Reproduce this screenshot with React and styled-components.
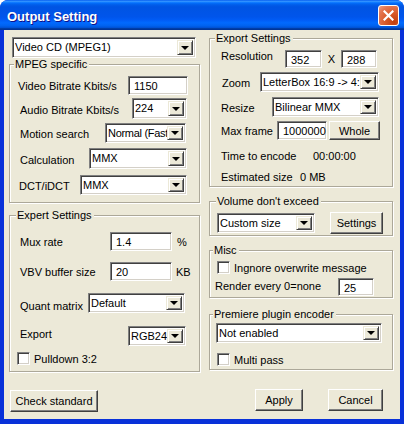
import React from "react";
import styled, { createGlobalStyle } from "styled-components";

const Global = createGlobalStyle`
  html, body { margin: 0; padding: 0; background: #fff; }
  body { font-family: "Liberation Sans", Arial, sans-serif; font-size: 11px; color: #000; }
`;

const Window = styled.div`
  width: 404px;
  height: 424px;
  display: flex;
  flex-direction: column;
  background: #0831d9;
  border-radius: 8px 8px 0 0;
  overflow: hidden;
`;

const TitleBar = styled.div`
  height: 30px;
  flex: none;
  display: flex;
  align-items: center;
  padding: 0 5px 0 7px;
  background: linear-gradient(
    to bottom,
    #0058ee 0%, #3593ff 4%, #288eff 6%, #127dff 8%, #036ffc 10%,
    #0262ee 14%, #0057e5 20%, #0054e3 24%, #0055eb 56%, #005bf5 66%,
    #026afe 76%, #0062ef 86%, #0052d6 92%, #0040ab 94%, #003092 100%
  );
`;

const Title = styled.div`
  flex: 1;
  color: #fff;
  font-weight: bold;
  font-size: 13px;
  text-shadow: 1px 1px #0f1089;
  padding-top: 2px;
`;

const CloseButton = styled.div`
  width: 19px;
  height: 19px;
  border: 1px solid #fff;
  border-radius: 3px;
  display: flex;
  align-items: center;
  justify-content: center;
  background: radial-gradient(circle at 80% 85%, #c13e0d 0%, #d95a28 40%, #e47651 75%, #eea085 100%);
`;

const Client = styled.div`
  flex: 1;
  margin: 0 4px 5px 4px;
  background: #ece9d8;
  display: flex;
  padding-left: 5px;
  gap: 9px;
`;

const Column = styled.div`
  width: ${(p) => p.w}px;
  display: flex;
  flex-direction: column;
  padding-top: ${(p) => p.pt}px;
`;

const Group = styled.fieldset`
  margin: ${(p) => p.mt || 0}px 0 0 0;
  padding: 0 0 ${(p) => p.pb || 0}px 0;
  border: 1px solid #aca899;
  box-shadow: inset 1px 1px 0 #fff, 1px 1px 0 #fff;
  min-width: 0;
`;

const Legend = styled.legend`
  margin-left: ${(p) => p.lx || 4}px;
  padding: 0 2px 0 1px;
  line-height: 13px;
  height: 13px;
  background: #ece9d8;
`;

const Row = styled.div`
  display: flex;
  align-items: center;
  height: ${(p) => p.h}px;
  margin-top: ${(p) => p.mt || 0}px;
  padding-left: ${(p) => p.pl || 0}px;
`;

const Label = styled.span`
  width: ${(p) => p.w}px;
  flex: none;
  white-space: nowrap;
  position: relative;
  top: ${(p) => p.dy || 0}px;
`;

const Sunken = styled.div`
  box-sizing: border-box;
  border-top: 1px solid #808080;
  border-left: 1px solid #808080;
  border-bottom: 1px solid #fff;
  border-right: 1px solid #fff;
  box-shadow: inset 1px 1px 0 #404040, inset -1px -1px 0 #d4d0c8;
  background: #fff;
`;

const Edit = styled(Sunken)`
  width: ${(p) => p.w}px;
  height: ${(p) => p.h || 19}px;
  flex: none;
  padding: 3px 0 0 5px;
  white-space: nowrap;
`;

const ComboBox = styled(Sunken)`
  width: ${(p) => p.w}px;
  height: ${(p) => p.h || 21}px;
  flex: none;
  display: flex;
  align-items: stretch;
  padding: 2px;
  margin-left: ${(p) => p.ml || 0}px;
`;

const ComboText = styled.div`
  flex: 1;
  overflow: hidden;
  white-space: nowrap;
  padding: 1px 0 0 0;
  letter-spacing: ${(p) => (p.tight ? "-0.3px" : "0")};
`;

const ArrowButton = styled.div`
  width: 16px;
  flex: none;
  box-sizing: border-box;
  background: #ece9d8;
  border-top: 1px solid #ece9d8;
  border-left: 1px solid #ece9d8;
  border-bottom: 1px solid #404040;
  border-right: 1px solid #404040;
  box-shadow: inset 1px 1px 0 #fff, inset -1px -1px 0 #808080;
  display: flex;
  align-items: center;
  justify-content: center;
`;

const Arrow = styled.div`
  width: 0;
  height: 0;
  border-left: 4px solid transparent;
  border-right: 4px solid transparent;
  border-top: 4px solid #000;
`;

const Button = styled.div`
  box-sizing: border-box;
  width: ${(p) => p.w}px;
  height: ${(p) => p.h || 22}px;
  margin-left: ${(p) => p.ml || 0}px;
  flex: none;
  display: flex;
  align-items: center;
  justify-content: center;
  background: #ece9d8;
  border-top: 1px solid #fff;
  border-left: 1px solid #fff;
  border-bottom: 1px solid #404040;
  border-right: 1px solid #404040;
  box-shadow: inset -1px -1px 0 #808080;
  white-space: nowrap;
`;

const CheckBox = styled(Sunken)`
  width: 13px;
  height: 13px;
  flex: none;
  margin-right: 4px;
`;

const Unit = styled.span`
  margin-left: ${(p) => p.ml}px;
`;

const Times = styled.span`
  width: ${(p) => p.w}px;
  text-align: center;
  flex: none;
`;

const BottomRow = styled.div`
  display: flex;
  margin-top: ${(p) => p.mt}px;
  padding-left: ${(p) => p.pl || 0}px;
  justify-content: ${(p) => p.justify || "flex-start"};
  padding-right: ${(p) => p.pr || 0}px;
`;

const Combo = ({ w, h, ml, tight, children }) => (
  <ComboBox w={w} h={h} ml={ml}>
    <ComboText tight={tight}>{children}</ComboText>
    <ArrowButton>
      <Arrow />
    </ArrowButton>
  </ComboBox>
);

const Check = ({ children }) => (
  <>
    <CheckBox />
    <span>{children}</span>
  </>
);

export default function App() {
  return (
    <>
      <Global />
      <Window>
        <TitleBar>
          <Title>Output Setting</Title>
          <CloseButton>
            <svg width="11" height="11" viewBox="0 0 11 11">
              <path d="M1.5 1.5 L9.5 9.5 M9.5 1.5 L1.5 9.5" stroke="#fff" strokeWidth="2.2" strokeLinecap="square" />
            </svg>
          </CloseButton>
        </TitleBar>
        <Client>
          <Column w={191} pt={7}>
            <Row h={21} pl={3}>
              <Combo w={184}>Video CD (MPEG1)</Combo>
            </Row>
            <Group pb={7}>
              <Legend lx={4}>MPEG specific</Legend>
              <Row h={19} mt={5} pl={8}>
                <Label w={110}>Video Bitrate Kbits/s</Label>
                <Edit w={60}>1150</Edit>
              </Row>
              <Row h={21} mt={3} pl={10}>
                <Label w={112} dy={1}>Audio Bitrate Kbits/s</Label>
                <Combo w={55}>224</Combo>
              </Row>
              <Row h={20} mt={4} pl={10}>
                <Label w={85} dy={1}>Motion search</Label>
                <Combo w={81} h={20} tight>Normal (Fast)</Combo>
              </Row>
              <Row h={21} mt={5} pl={10}>
                <Label w={69} dy={1}>Calculation</Label>
                <Combo w={98}>MMX</Combo>
              </Row>
              <Row h={20} mt={6} pl={9}>
                <Label w={61} dy={1}>DCT/iDCT</Label>
                <Combo w={107} h={20}>MMX</Combo>
              </Row>
            </Group>
            <Group mt={6} pb={6}>
              <Legend lx={6}>Expert Settings</Legend>
              <Row h={19} mt={10} pl={10}>
                <Label w={90}>Mux rate</Label>
                <Edit w={62}>1.4</Edit>
                <Unit ml={5}>%</Unit>
              </Row>
              <Row h={19} mt={11} pl={10}>
                <Label w={90}>VBV buffer size</Label>
                <Edit w={62}>20</Edit>
                <Unit ml={4}>KB</Unit>
              </Row>
              <Row h={20} mt={12} pl={10}>
                <Label w={68} dy={3}>Quant matrix</Label>
                <Combo w={97} h={20}>Default</Combo>
              </Row>
              <Row h={20} mt={13} pl={10}>
                <Label w={108} dy={-2}>Export</Label>
                <Combo w={58} h={20}>RGB24</Combo>
              </Row>
              <Row h={13} mt={6} pl={7}>
                <Check>Pulldown 3:2</Check>
              </Row>
            </Group>
            <BottomRow mt={18} pl={1}>
              <Button w={88}>Check standard</Button>
            </BottomRow>
          </Column>
          <Column w={184} pt={2}>
            <Group pb={3}>
              <Legend lx={5}>Export Settings</Legend>
              <Row h={18} mt={5} pl={11}>
                <Label w={64} dy={-3}>Resolution</Label>
                <Edit w={37} h={18}>352</Edit>
                <Times w={19}>X</Times>
                <Edit w={36} h={18}>288</Edit>
              </Row>
              <Row h={20} mt={4} pl={12}>
                <Label w={38} dy={1}>Zoom</Label>
                <Combo w={119} h={20}>LetterBox 16:9 -&gt; 4:3</Combo>
              </Row>
              <Row h={20} mt={5} pl={11}>
                <Label w={51} dy={1}>Resize</Label>
                <Combo w={107} h={20}>Bilinear MMX</Combo>
              </Row>
              <Row h={19} mt={4} pl={11}>
                <Label w={56}>Max frame</Label>
                <Edit w={50}>1000000</Edit>
                <Button w={51} h={19} ml={2}>Whole</Button>
              </Row>
              <Row h={13} mt={9} pl={11}>
                <Label w={92}>Time to encode</Label>
                <span>00:00:00</span>
              </Row>
              <Row h={13} mt={8} pl={11}>
                <Label w={79}>Estimated size</Label>
                <span>0 MB</span>
              </Row>
            </Group>
            <Group mt={8} pb={1}>
              <Legend lx={6}>Volume don't exceed</Legend>
              <Row h={22} mt={4} pl={7}>
                <Combo w={98} h={20}>Custom size</Combo>
                <Button w={53} ml={15}>Settings</Button>
              </Row>
            </Group>
            <Group mt={8} pb={1}>
              <Legend lx={3}>Misc</Legend>
              <Row h={13} mt={4} pl={7}>
                <Check>Ingnore overwrite message</Check>
              </Row>
              <Row h={18} mt={4} pl={5}>
                <Label w={123} dy={-1}>Render every 0=none</Label>
                <Edit w={36} h={18}>25</Edit>
              </Row>
            </Group>
            <Group mt={10} pb={3}>
              <Legend lx={3}>Premiere plugin encoder</Legend>
              <Row h={20} mt={2} pl={6}>
                <Combo w={166} h={20}>Not enabled</Combo>
              </Row>
              <Row h={13} mt={10} pl={7}>
                <Check>Multi pass</Check>
              </Row>
            </Group>
            <BottomRow mt={19} justify="flex-end" pr={10}>
              <Button w={48}>Apply</Button>
              <Button w={55} ml={25}>Cancel</Button>
            </BottomRow>
          </Column>
        </Client>
      </Window>
    </>
  );
}
